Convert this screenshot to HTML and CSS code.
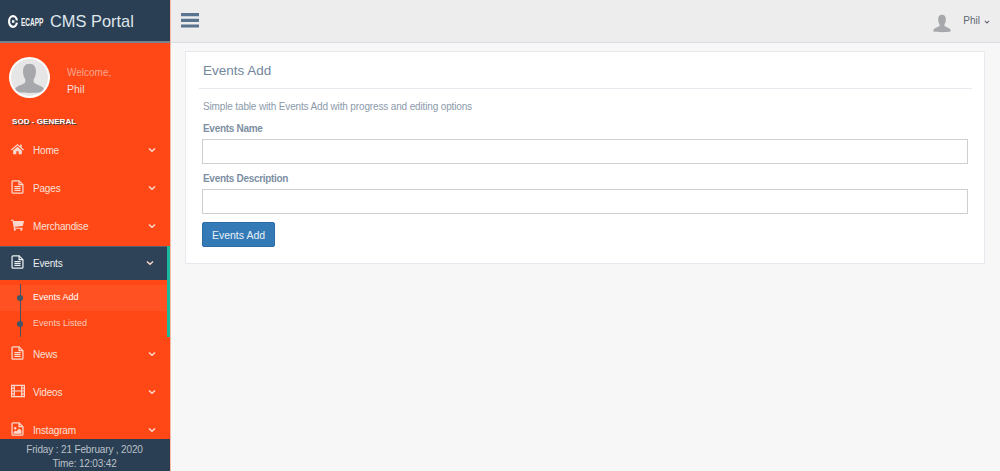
FILE: index.html
```html
<!DOCTYPE html>
<html lang="en">
<head>
<meta charset="utf-8">
<title>Events Add</title>
<link rel="stylesheet" href="styles.css">
</head>
<body>
<svg class="defs" width="0" height="0" aria-hidden="true">
  <symbol id="i-file" viewBox="0 0 16 18"><path d="M1 2.200C1 1.500 1.500 1 2.200 1H10l5 5v9.800c0 .7-.5 1.200-1.200 1.200H2.200C1.500 17 1 16.500 1 15.800Z" fill="none" stroke="currentColor" stroke-width="1.600"/><path d="M10 1v5h5" fill="none" stroke="currentColor" stroke-width="1.600"/><path d="M4 8.500h8M4 11h8M4 13.500h8" stroke="currentColor" stroke-width="1.500"/></symbol>
  <symbol id="i-chev" viewBox="0 0 10 7"><path d="M1.200 1.500 5 5.200l3.800-3.700" fill="none" stroke="currentColor" stroke-width="1.800"/></symbol>
  <symbol id="i-user" viewBox="0 0 40 40"><path d="M20 5c-5 0-7 3.500-7 8.500 0 3.500 1 6.500 2.500 8.500v3c-1.500 2.500-9.500 3.500-11 7v3.500c4 1.500 27 1.500 31 0V32c-1.500-3.500-9.500-4.500-11-7v-3c1.500-2 2.500-5 2.500-8.500C27 8.500 25 5 20 5Z" fill="currentColor"/></symbol>
</svg>
<div class="app">
  <aside class="sidebar">
    <div class="brand">
      <svg class="brand-mark" viewBox="0 0 10 13" preserveAspectRatio="none" aria-hidden="true"><ellipse cx="5" cy="6.500" rx="3.900" ry="5.300" fill="none" stroke="#fff" stroke-width="2.200"/><rect x="7" y="5.400" width="3" height="2.200" fill="#2a3f54"/><rect x="4" y="5.200" width="2.400" height="2.600" fill="#fff"/></svg>
      <span class="brand-ecapp">ECAPP</span>
      <span class="brand-title">CMS Portal</span>
    </div>
    <div class="profile">
      <div class="avatar"><svg class="avatar-img" aria-hidden="true"><use href="#i-user"/></svg></div>
      <div class="profile-info">
        <span class="welcome">Welcome,</span>
        <span class="profile-name">Phil</span>
      </div>
    </div>
    <nav class="nav">
      <h3 class="nav-heading">SOD - GENERAL</h3>
      <ul class="menu">
        <li class="item"><a class="link">
          <svg class="ico" viewBox="0 0 17 15" aria-hidden="true"><path d="M8.500 1 0 8.200l1 1.100L8.500 3l7.500 6.300 1-1.100-3-2.500V1.500h-2v2.500Z" fill="currentColor"/><path d="M2.800 9.300 8.500 4.500l5.700 4.800V14.500H10v-4H7v4H2.800Z" fill="currentColor"/></svg>
          <span class="label">Home</span><svg class="chev" aria-hidden="true"><use href="#i-chev"/></svg></a></li>
        <li class="item"><a class="link"><svg class="ico" aria-hidden="true"><use href="#i-file"/></svg><span class="label">Pages</span><svg class="chev" aria-hidden="true"><use href="#i-chev"/></svg></a></li>
        <li class="item item-merch"><a class="link">
          <svg class="ico" viewBox="0 0 17 15" aria-hidden="true"><path d="M0 .5h3l.6 1.800H17l-1.500 6.400-10.500 1 .3 1.300h10v1.500H3.800L1.900 2H0Z" fill="currentColor"/><circle cx="5" cy="13.600" r="1.400" fill="currentColor"/><circle cx="13.500" cy="13.600" r="1.400" fill="currentColor"/></svg>
          <span class="label">Merchandise</span><svg class="chev" aria-hidden="true"><use href="#i-chev"/></svg></a></li>
        <li class="item item-open">
          <a class="link link-active"><svg class="ico" aria-hidden="true"><use href="#i-file"/></svg><span class="label">Events</span><svg class="chev" aria-hidden="true"><use href="#i-chev"/></svg></a>
          <ul class="submenu">
            <li class="sub sub-current"><span class="dot"></span>Events Add</li>
            <li class="sub"><span class="dot"></span>Events Listed</li>
          </ul>
        </li>
        <li class="item"><a class="link"><svg class="ico" aria-hidden="true"><use href="#i-file"/></svg><span class="label">News</span><svg class="chev" aria-hidden="true"><use href="#i-chev"/></svg></a></li>
        <li class="item"><a class="link">
          <svg class="ico ico-wide" viewBox="0 0 17 15" aria-hidden="true"><path d="M.7.700h15.600v13.600H.7ZM4 .7v13.600M13 .7v13.600M.7 4h3.300M.7 7.500h3.300M.7 11h3.300M13 4h3.300M13 7.500h3.300M13 11h3.300M4 7.500h9" fill="none" stroke="currentColor" stroke-width="1.500"/></svg>
          <span class="label">Videos</span><svg class="chev" aria-hidden="true"><use href="#i-chev"/></svg></a></li>
        <li class="item"><a class="link">
          <svg class="ico" viewBox="0 0 16 18" aria-hidden="true"><path d="M1 2.200C1 1.500 1.500 1 2.200 1H10l5 5v9.800c0 .7-.5 1.200-1.200 1.200H2.200C1.500 17 1 16.500 1 15.800ZM10 1v5h5" fill="none" stroke="currentColor" stroke-width="1.600"/><circle cx="5" cy="8" r="1.500" fill="currentColor"/><path d="M3 15v-2l2.500-2 1.500 1 3-3.500L13 11v4Z" fill="currentColor"/></svg>
          <span class="label">Instagram</span><svg class="chev" aria-hidden="true"><use href="#i-chev"/></svg></a></li>
      </ul>
    </nav>
    <footer class="clock">
      <div>Friday : 21 February , 2020</div>
      <div>Time: 12:03:42</div>
    </footer>
  </aside>
  <div class="main">
    <header class="topbar">
      <svg class="burger" viewBox="0 0 18 15" aria-hidden="true"><path d="M0 1.600h18M0 7.300h18M0 13h18" stroke="currentColor" stroke-width="3.200"/></svg>
      <div class="user">
        <svg class="user-img" aria-hidden="true"><use href="#i-user"/></svg>
        <span class="user-name">Phil</span>
        <svg class="user-chev" aria-hidden="true"><use href="#i-chev"/></svg>
      </div>
    </header>
    <main class="content">
      <section class="panel">
        <h2 class="panel-title">Events Add</h2>
        <p class="panel-text">Simple table with Events Add with progress and editing options</p>
        <form class="form">
          <label class="field-label" for="name">Events Name</label>
          <input class="field" id="name" type="text">
          <label class="field-label" for="desc">Events Description</label>
          <input class="field" id="desc" type="text">
          <button class="btn" type="button">Events Add</button>
        </form>
      </section>
    </main>
  </div>
</div>
</body>
</html>
```
FILE: styles.css
```css
* { box-sizing: border-box; }
html, body { margin: 0; height: 100%; overflow: hidden; }
body {
  font-family: "Liberation Sans", Arial, sans-serif;
  font-size: 10px;
  color: #73879c;
  background: #f7f7f7;
}
.defs { position: absolute; }
.app { display: flex; height: 471px; }

/* Sidebar */
.sidebar {
  width: 171px;
  flex: none;
  display: flex;
  flex-direction: column;
  background: #ff4816;
  border-right: 1px solid #fbb8a5;
  color: #fff;
}
.brand {
  height: 43px;
  flex: none;
  display: flex;
  align-items: center;
  padding: 3px 0 1px 8px;
  background: #2a3f54;
  border-bottom: 2px solid #75828f;
}
.brand-mark { width: 10px; height: 13px; flex: none; }
.brand-ecapp {
  font-size: 10.500px;
  font-weight: 700;
  margin-left: 3px;
  transform: scaleX(.62);
  transform-origin: left center;
  width: 29px;
  color: #f2f2f2;
}
.brand-title { font-size: 16.400px; color: #dfe6ec; }
.profile {
  height: 67px;
  flex: none;
  display: flex;
  padding: 14px 0 0 9px;
}
.avatar {
  width: 41px;
  height: 41px;
  border-radius: 50%;
  background: #fff;
  padding: 2px;
  flex: none;
}
.avatar-img {
  display: block;
  width: 37px;
  height: 37px;
  border-radius: 50%;
  background: #e6e6e6;
  color: #a6a8ab;
}
.profile-info {
  display: flex;
  flex-direction: column;
  gap: 5px;
  margin: 10px 0 0 17px;
  font-size: 10px;
}
.welcome { color: #f7a48d; }
.profile-name { color: #f5ddd5; font-size: 10.500px; }
.nav { flex: 1; min-height: 0; overflow: hidden; }
.nav-heading {
  margin: 0;
  padding: 1px 0 0 12px;
  height: 23px;
  line-height: 22px;
  font-size: 8px;
  font-weight: 700;
  letter-spacing: .05px;
  color: #fff;
  text-shadow: 1px 1px #444;
}
.menu, .submenu { list-style: none; margin: 0; padding: 0; }
.item { height: 38px; }
.item-merch { height: 37px; }
.item-open { height: auto; border-right: 3px solid #1abb9c; }
.link {
  display: flex;
  align-items: center;
  height: 34px;
  padding-left: 11px;
  color: #f9e0d8;
  font-size: 10px;
  letter-spacing: -.18px;
}
.link-active {
  background: #2f4358;
  box-shadow: inset 0 1px 0 #5b5f6b;
  color: #ecf0f1;
}
.ico { width: 13px; height: 14px; flex: none; color: #fbd9cf; margin-bottom: 3px; }
.ico-wide { width: 14px; }
.label { margin-left: 9px; flex: 1; }
.ico-wide + .label { margin-left: 8px; }
.chev { width: 8px; height: 6px; flex: none; margin-right: 14px; color: #fbd9cf; }
.link-active .chev { margin-right: 13px; }
.link-active .ico { color: #ecf0f1; }
.submenu {
  height: 57px;
  position: relative;
  padding-top: 5px;
}
.submenu::before {
  content: "";
  position: absolute;
  z-index: 1;
  left: 20px;
  top: 4px;
  bottom: 0;
  width: 1px;
  background: #425668;
}
.sub {
  height: 26px;
  line-height: 25px;
  padding-left: 33px;
  font-size: 9px;
  color: #f9c8b9;
  position: relative;
}
.sub-current { background: #ff5122; color: #fff; }
.dot {
  position: absolute;
  z-index: 2;
  left: 17px;
  top: 10px;
  width: 6px;
  height: 6px;
  border-radius: 50%;
  background: #425668;
}
.clock {
  height: 32px;
  flex: none;
  background: #2a3f54;
  color: #bac1c9;
  text-align: center;
  font-size: 10px;
  letter-spacing: -.15px;
  line-height: 14px;
  padding-top: 4px;
  padding-right: 1px;
}

/* Main */
.main { flex: 1; min-width: 0; display: flex; flex-direction: column; }
.topbar {
  height: 43px;
  flex: none;
  display: flex;
  align-items: center;
  justify-content: space-between;
  background: #ededed;
  border-bottom: 1px solid #d9dee4;
  padding: 0 10px 0 10px;
}
.burger { width: 18px; height: 15px; color: #5a738e; margin-bottom: 1px; }
.user { display: flex; align-items: center; }
.user-img { width: 22px; height: 22px; color: #a6a8ab; margin: 3px 10px 0 0; }
.user-name { font-size: 10px; color: #5f6770; margin-bottom: 1px; }
.user-chev { width: 6px; height: 4px; margin: 1px 0 0 4px; color: #5f6770; }
.content { flex: 1; padding: 8px 15px 0 14px; }
.panel {
  background: #fff;
  border: 1px solid #e6e9ed;
  padding: 0 16px;
  height: 213px;
}
.panel-title {
  margin: 0 -4px 11px -3px;
  padding: 0 3px 0 4px;
  height: 37px;
  line-height: 37px;
  font-size: 13.500px;
  font-weight: 400;
  color: #73879c;
  border-bottom: 1px solid #e6e9ed;
}
.panel-text { margin: 0 0 7px 1px; font-size: 10px; letter-spacing: -.145px; line-height: 14px; color: #8c9aab; }
.form { display: flex; flex-direction: column; align-items: stretch; }
.field-label { font-size: 10px; letter-spacing: -.3px; font-weight: 700; line-height: 14px; margin: 1px 0 3px 1px; color: #7d8fa3; }
.field {
  display: block;
  height: 25px;
  border: 1px solid #cfcfcf;
  background: #fff;
  margin-bottom: 7px;
  padding: 0;
}
.btn {
  align-self: flex-start;
  width: 73px;
  height: 25px;
  margin-top: 1px;
  padding: 0;
  background: #337ab7;
  border: 1px solid #2e6da4;
  border-radius: 2px;
  color: #e8f0f7;
  font: 400 10.500px "Liberation Sans", Arial, sans-serif;
}
```
